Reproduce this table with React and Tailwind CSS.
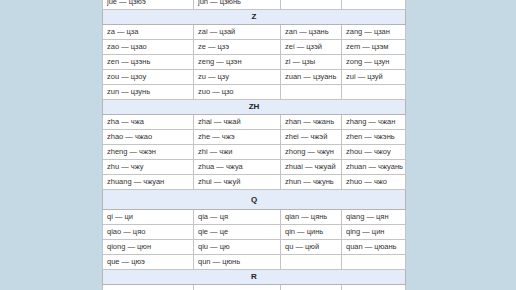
// Pinyin → Cyrillic (Palladius) syllable table, sections J..R
const sections = [
  {
    head: null,
    rows: [["jue — цзюэ", "jun — цзюнь", "", ""]],
  },
  {
    head: "Z",
    rows: [
      ["za — цза", "zai — цзай", "zan — цзань", "zang — цзан"],
      ["zao — цзао", "ze — цзэ", "zei — цзэй", "zem — цзэм"],
      ["zen — цзэнь", "zeng — цзэн", "zi — цзы", "zong — цзун"],
      ["zou — цзоу", "zu — цзу", "zuan — цзуань", "zui — цзуй"],
      ["zun — цзунь", "zuo — цзо", "", ""],
    ],
  },
  {
    head: "ZH",
    rows: [
      ["zha — чжа", "zhai — чжай", "zhan — чжань", "zhang — чжан"],
      ["zhao — чжао", "zhe — чжэ", "zhei — чжэй", "zhen — чжэнь"],
      ["zheng — чжэн", "zhi — чжи", "zhong — чжун", "zhou — чжоу"],
      ["zhu — чжу", "zhua — чжуа", "zhuai — чжуай", "zhuan — чжуань"],
      ["zhuang — чжуан", "zhui — чжуй", "zhun — чжунь", "zhuo — чжо"],
    ],
  },
  {
    head: "Q",
    tall: true,
    rows: [
      ["qi — ци", "qia — ця", "qian — цянь", "qiang — цян"],
      ["qiao — цяо", "qie — це", "qin — цинь", "qing — цин"],
      ["qiong — цюн", "qiu — цю", "qu — цюй", "quan — цюань"],
      ["que — цюэ", "qun — цюнь", "", ""],
    ],
  },
  {
    head: "R",
    rows: [["ran — жань", "rang — жан", "rao — жао", "re — жэ"]],
  },
];

export default function App() {
  return (
    <div
      className="w-[516px] h-[290px] overflow-hidden bg-[#c5d9e5] text-[#333]"
      style={{ fontFamily: '"Liberation Sans", Arial, sans-serif' }}
    >
      <div className="ml-[102px] -mt-[6px] w-[303px] bg-white">
        <table className="w-[303px] table-fixed border-collapse border border-[#a9a9a9] text-[7.5px] leading-none">
          <colgroup>
            <col className="w-[91px]" />
            <col className="w-[87px]" />
            <col className="w-[61px]" />
            <col className="w-[64px]" />
          </colgroup>
          <tbody>
            {sections.map((s, si) => (
              <SectionRows key={si} s={s} />
            ))}
          </tbody>
        </table>
      </div>
    </div>
  );
}

function SectionRows({ s }) {
  return (
    <>
      {s.head && (
        <tr className={s.tall ? "h-[20px]" : "h-[15px]"}>
          <th
            colSpan={4}
            className="border border-[#b4b4b4] bg-[#e3ecf8] text-center align-middle text-[8px] font-bold text-[#222]"
          >
            {s.head}
          </th>
        </tr>
      )}
      {s.rows.map((r, ri) => (
        <tr key={ri} className="h-[15px]">
          {r.map((c, ci) => (
            <td
              key={ci}
              className="border border-[#c4c4c4] pl-[4px] align-middle whitespace-nowrap overflow-hidden"
            >
              {c}
            </td>
          ))}
        </tr>
      ))}
    </>
  );
}
